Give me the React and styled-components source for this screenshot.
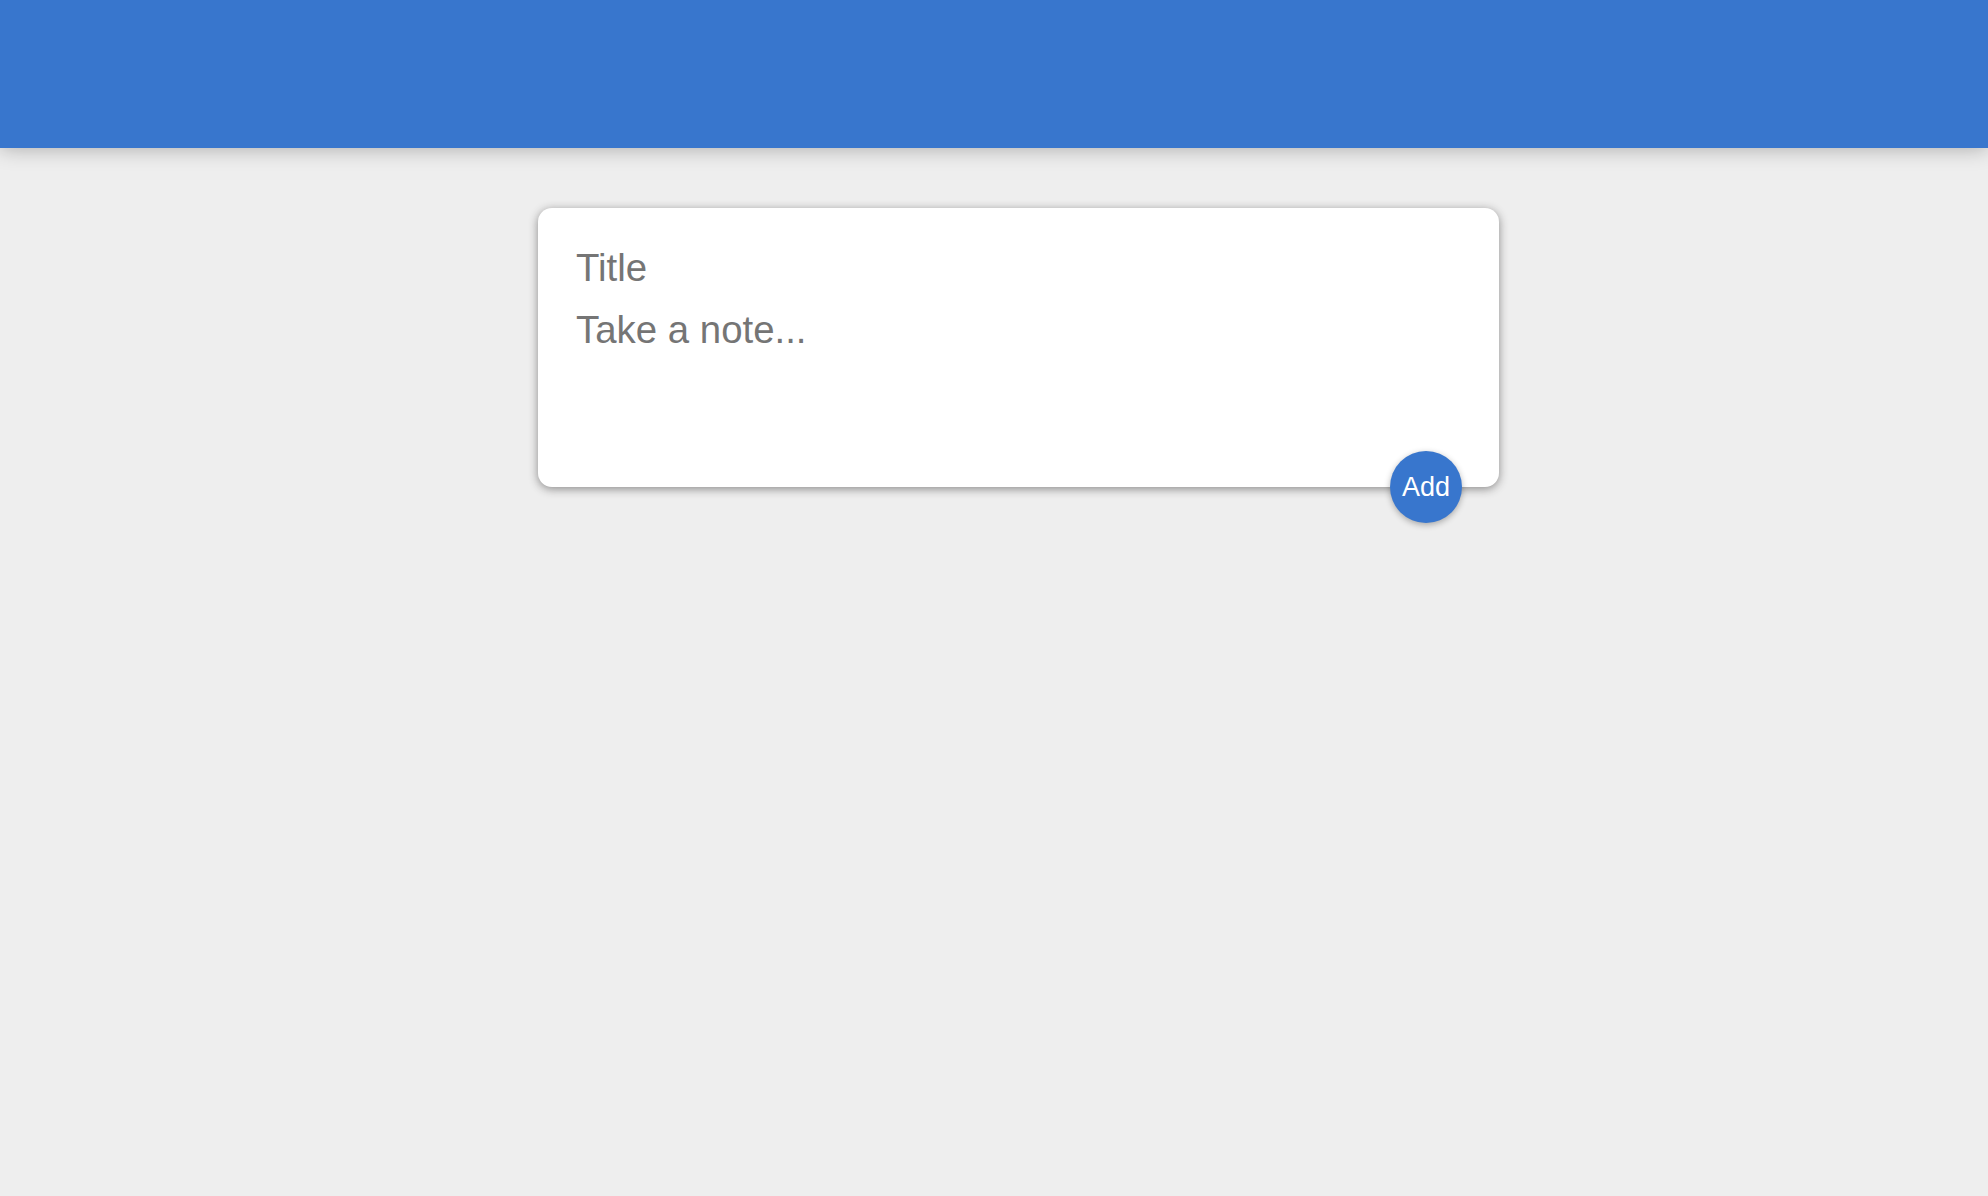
import React from "react";
import styled, { createGlobalStyle } from "styled-components";

const Global = createGlobalStyle`
  * { box-sizing: border-box; }
  html, body { margin: 0; padding: 0; }
  body {
    background: #eeeeee;
    font-family: "Liberation Sans", Arial, Helvetica, sans-serif;
    font-size: 32px;
    min-height: 1196px;
  }
`;

const Header = styled.header`
  height: 148px;
  width: 100%;
  background: #3876cd;
  box-shadow: 0 0 20px 0 rgba(0, 0, 0, 0.3);
  position: relative;
  z-index: 1;
`;

const Main = styled.main`
  display: flex;
  justify-content: flex-start;
  padding: 60px 0 0 538px;
`;

const Form = styled.form`
  position: relative;
  width: 961px;
  height: 279px;
  background: #fff;
  border-radius: 14px;
  padding: 30px 30px 28px;
  box-shadow: 0 2px 10px rgb(138, 137, 137);
  display: flex;
  flex-direction: column;
`;

const fieldStyles = `
  width: 100%;
  border: none;
  outline: none;
  padding: 8px;
  font-size: 38.4px;
  line-height: 44px;
  font-family: "Liberation Sans", Arial, Helvetica, sans-serif;
  color: #333;
  background: transparent;
  resize: none;
  &::placeholder { color: #757575; opacity: 1; }
`;

const TitleInput = styled.input`
  ${fieldStyles}
  height: 62px;
  padding-bottom: 10px;
`;

const NoteArea = styled.textarea`
  ${fieldStyles}
  flex: 1;
  display: block;
`;

const AddButton = styled.button`
  position: absolute;
  right: 37px;
  bottom: -36px;
  width: 72px;
  height: 72px;
  border-radius: 50%;
  border: none;
  background: #3876cd;
  color: #fff;
  font-family: "Liberation Sans", Arial, Helvetica, sans-serif;
  font-size: 27px;
  padding: 0;
  cursor: pointer;
  box-shadow: 0 2px 6px rgba(0, 0, 0, 0.3);
  outline: none;
`;

export default function App() {
  return (
    <>
      <Global />
      <Header />
      <Main>
        <Form onSubmit={(e) => e.preventDefault()}>
          <TitleInput name="title" placeholder="Title" />
          <NoteArea name="content" placeholder="Take a note..." rows={3} />
          <AddButton type="submit">Add</AddButton>
        </Form>
      </Main>
    </>
  );
}
